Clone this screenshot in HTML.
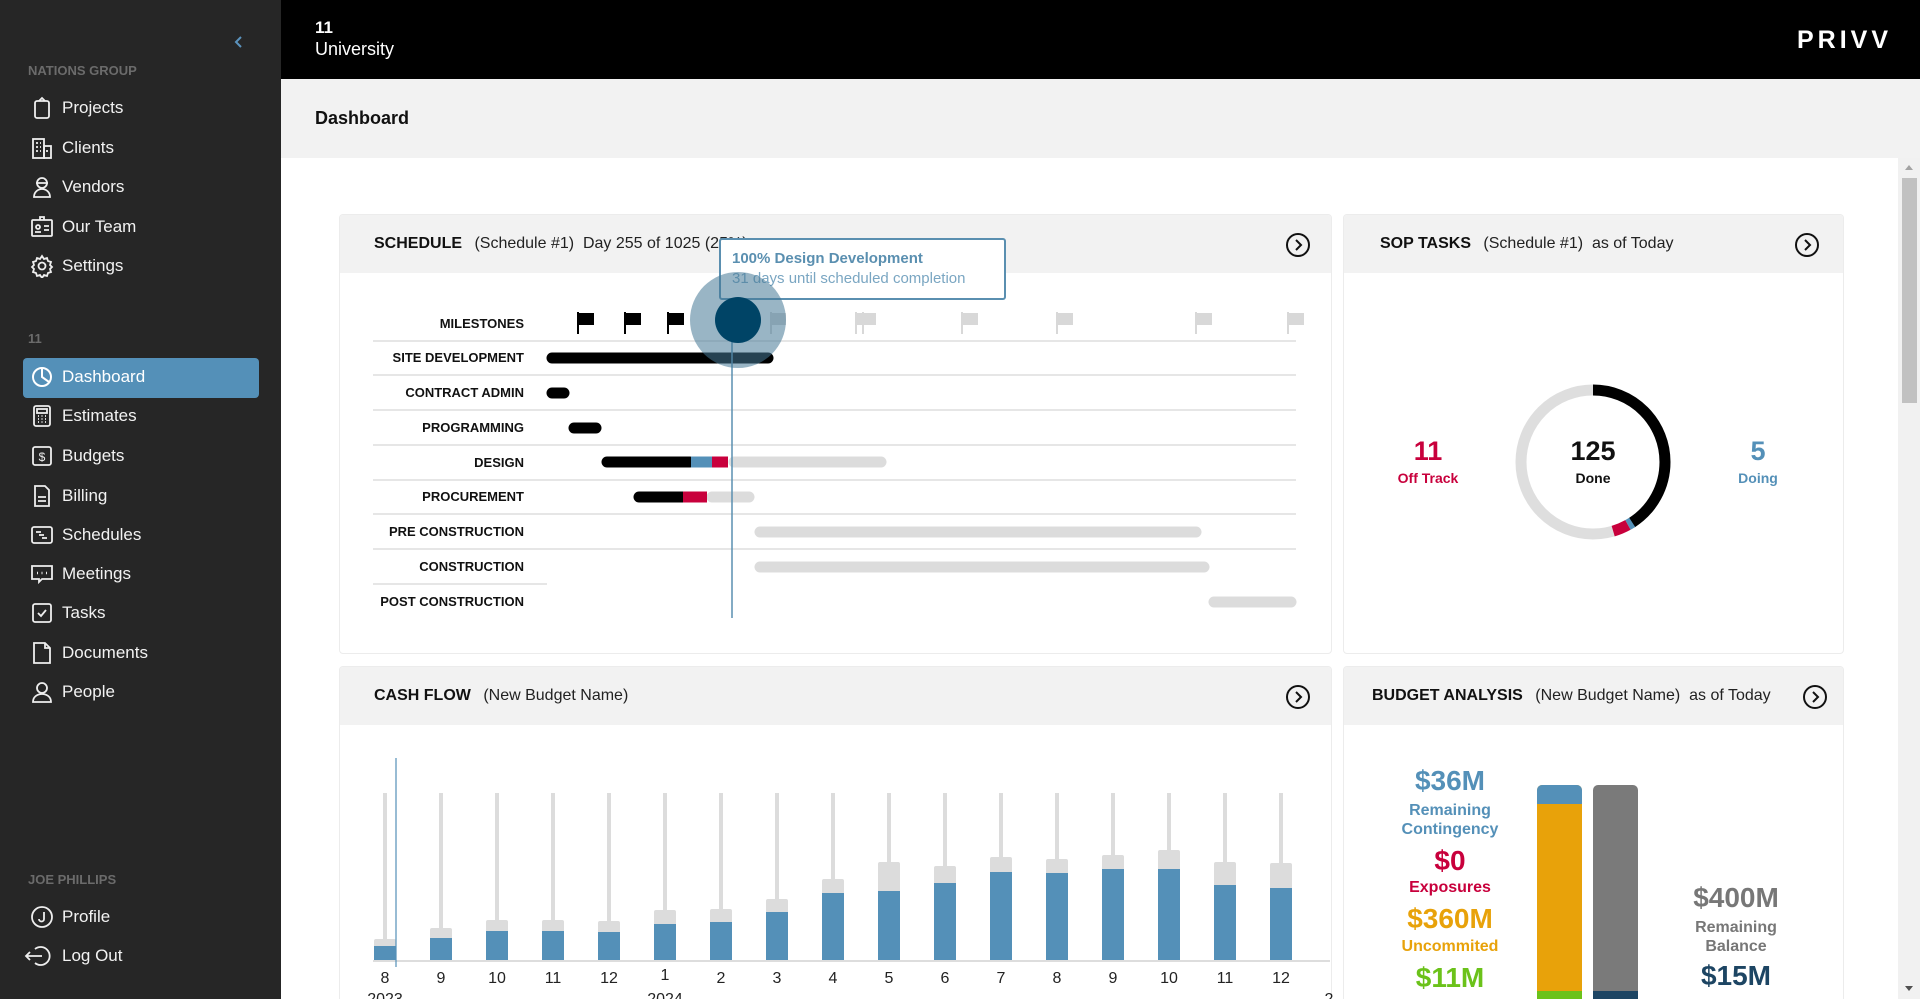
<!DOCTYPE html>
<html style="overflow:hidden;width:1920px;height:999px"><head><meta charset="utf-8"><style>
*{margin:0;padding:0;box-sizing:border-box}
body{width:1920px;height:999px;overflow:hidden;background:#fff;font-family:"Liberation Sans",Arial,sans-serif;position:relative}
#wrap{position:absolute;left:0;top:0;width:1920px;height:999px;overflow:hidden}
.a{position:absolute}
#side{left:0;top:0;width:281px;height:999px;background:#262626}
.grp{position:absolute;left:28px;font-size:13px;font-weight:bold;color:#6b6b6b}
.it{position:absolute;left:62px;font-size:17px;color:#f2f2f2;line-height:20px}
.ic{position:absolute;left:30px;width:24px;height:24px}
.card{position:absolute;background:#fff;border:1px solid #ececec;border-radius:4px;overflow:hidden}
.ch{position:absolute;left:0;top:0;right:0;height:58px;background:#f2f2f2}
.ct{position:absolute;font-size:16px;color:#222;white-space:nowrap}
.ct b{color:#111;margin-right:8px}
.lbl{position:absolute;right:0;font-size:13px;font-weight:bold;color:#111;text-align:right;width:200px}
.big{position:absolute;font-weight:bold;text-align:center;width:200px}
</style></head><body><div id="wrap">

<div id="side" class="a">
 <svg class="a" style="left:233px;top:34px" width="12" height="16" viewBox="0 0 12 16"><path d="M8 3 L3 8 L8 13" stroke="#5b93bd" stroke-width="2" fill="none"/></svg>
 <div class="grp" style="top:63px">NATIONS GROUP</div>
 <svg class="ic" style="top:96px" viewBox="0 0 24 24" fill="none" stroke="#eee" stroke-width="1.8"><rect x="5" y="5" width="14" height="17" rx="2"/><path d="M9 5 L12 2 L15 5"/></svg>
 <div class="it" style="top:98px">Projects</div>
 <svg class="ic" style="top:136px" viewBox="0 0 24 24" fill="none" stroke="#eee" stroke-width="1.8"><rect x="3" y="3" width="11" height="19"/><rect x="14" y="10" width="7" height="12"/><path d="M6 7h2M10 7h1M6 11h2M10 11h1M6 15h2M10 15h1M17 14v2"/></svg>
 <div class="it" style="top:138px">Clients</div>
 <svg class="ic" style="top:175px" viewBox="0 0 24 24" fill="none" stroke="#eee" stroke-width="1.8"><circle cx="12" cy="8" r="5"/><path d="M6 8h12M4 22c0-5 4-8 8-8s8 3 8 8z"/></svg>
 <div class="it" style="top:177px">Vendors</div>
 <svg class="ic" style="top:215px" viewBox="0 0 24 24" fill="none" stroke="#eee" stroke-width="1.8"><rect x="2" y="5" width="20" height="16" rx="1"/><path d="M10 5V2h4v3M5 17h6M14 11h5M14 15h5"/><circle cx="8" cy="12" r="2"/></svg>
 <div class="it" style="top:217px">Our Team</div>
 <svg class="ic" style="top:254px" viewBox="0 0 24 24" fill="none" stroke="#eee" stroke-width="1.8"><circle cx="12" cy="12" r="3.5"/><path d="M12 2l2 3 3-1 1 3 3 1-1 3 2 2-2 2 1 3-3 1-1 3-3-1-2 3-2-3-3 1-1-3-3-1 1-3-2-2 2-2-1-3 3-1 1-3 3 1z"/></svg>
 <div class="it" style="top:256px">Settings</div>
 <div class="grp" style="top:331px">11</div>
 <div class="a" style="left:23px;top:358px;width:236px;height:40px;background:#5490b8;border-radius:4px"></div>
 <svg class="ic" style="top:365px" viewBox="0 0 24 24" fill="none" stroke="#fff" stroke-width="2"><circle cx="12" cy="12" r="9"/><path d="M12 3v9l7 5" /></svg>
 <div class="it" style="top:367px;color:#fff">Dashboard</div>
 <svg class="ic" style="top:404px" viewBox="0 0 24 24" fill="none" stroke="#eee" stroke-width="1.8"><rect x="4" y="2" width="16" height="20" rx="2"/><rect x="7" y="5" width="10" height="4"/><path d="M8 12h1M11.5 12h1M15 12h1M8 15h1M11.5 15h1M15 15h1M8 18h1M11.5 18h1M15 18h1"/></svg>
 <div class="it" style="top:406px">Estimates</div>
 <svg class="ic" style="top:444px" viewBox="0 0 24 24" fill="none" stroke="#eee" stroke-width="1.8"><rect x="3" y="3" width="18" height="18" rx="2"/><text x="12" y="17" font-size="12" fill="#eee" stroke="none" text-anchor="middle" font-family="Liberation Sans">$</text></svg>
 <div class="it" style="top:446px">Budgets</div>
 <svg class="ic" style="top:484px" viewBox="0 0 24 24" fill="none" stroke="#eee" stroke-width="1.8"><path d="M5 2h10l4 4v16H5z"/><path d="M8 13h8M8 17h8"/></svg>
 <div class="it" style="top:486px">Billing</div>
 <svg class="ic" style="top:523px" viewBox="0 0 24 24" fill="none" stroke="#eee" stroke-width="1.8"><rect x="2" y="4" width="20" height="16" rx="2"/><path d="M6 9h5M9 12h5M12 15h5"/></svg>
 <div class="it" style="top:525px">Schedules</div>
 <svg class="ic" style="top:562px" viewBox="0 0 24 24" fill="none" stroke="#eee" stroke-width="1.8"><path d="M2 4h20v13H12l-3 3v-3H2z"/><path d="M7 11h1M11.5 11h1M16 11h1" stroke-width="2.4"/></svg>
 <div class="it" style="top:564px">Meetings</div>
 <svg class="ic" style="top:601px" viewBox="0 0 24 24" fill="none" stroke="#eee" stroke-width="1.8"><rect x="3" y="3" width="18" height="18" rx="2"/><path d="M8 12l3 3 5-6"/></svg>
 <div class="it" style="top:603px">Tasks</div>
 <svg class="ic" style="top:641px" viewBox="0 0 24 24" fill="none" stroke="#eee" stroke-width="1.8"><path d="M4 2h11l5 5v15H4z"/><path d="M15 2v5h5"/></svg>
 <div class="it" style="top:643px">Documents</div>
 <svg class="ic" style="top:680px" viewBox="0 0 24 24" fill="none" stroke="#eee" stroke-width="1.8"><circle cx="12" cy="8" r="5"/><path d="M3 22c0-5 4-8 9-8s9 3 9 8z"/></svg>
 <div class="it" style="top:682px">People</div>
 <div class="grp" style="top:872px">JOE PHILLIPS</div>
 <svg class="ic" style="top:905px" viewBox="0 0 24 24" fill="none" stroke="#eee" stroke-width="1.8"><circle cx="12" cy="12" r="10"/><path d="M14 7v7a2.5 2.5 0 0 1-5 0"/></svg>
 <div class="it" style="top:907px">Profile</div>
 <svg class="ic" style="top:944px;left:24px;width:28px" viewBox="0 0 28 24" fill="none" stroke="#eee" stroke-width="1.8"><path d="M11 5a9 9 0 1 1 0 14"/><path d="M18 12H2M6 8l-4 4 4 4"/></svg>
 <div class="it" style="top:946px">Log Out</div>
</div>

<div class="a" style="left:281px;top:0;width:1639px;height:79px;background:#000"></div>
<div class="a" style="left:315px;top:18px;color:#fff;font-size:17px;font-weight:bold">11</div>
<div class="a" style="left:315px;top:39px;color:#fff;font-size:18px">University</div>
<div class="a" style="left:1797px;top:26px;color:#fff;font-size:25px;font-weight:bold;letter-spacing:4px">PRIVV</div>

<div class="a" style="left:281px;top:79px;width:1639px;height:79px;background:#f2f2f2"></div>
<div class="a" style="left:315px;top:108px;font-size:18px;font-weight:bold;color:#111">Dashboard</div>

<div class="a" style="left:1898px;top:158px;width:22px;height:841px;background:#f1f1f1"></div>
<div class="a" style="left:1902px;top:178px;width:15px;height:225px;background:#c1c1c1"></div>
<svg class="a" style="left:1903px;top:162px" width="12" height="10"><path d="M2 8L6 3L10 8z" fill="#a3a3a3"/></svg>
<svg class="a" style="left:1903px;top:984px" width="12" height="10"><path d="M2 2L6 7L10 2z" fill="#505050"/></svg>

<!-- Schedule card -->
<div class="card" style="left:339px;top:214px;width:993px;height:440px">
 <div class="ch"></div>
 <div class="ct" style="left:34px;top:20px"><b>SCHEDULE</b> (Schedule #1)&nbsp;&nbsp;Day 255 of 1025 (25%)</div>
 <svg class="a" style="left:945px;top:17px" width="26" height="26" viewBox="0 0 26 26"><circle cx="13" cy="13" r="11" fill="none" stroke="#111" stroke-width="2"/><path d="M11 8l5 5-5 5" fill="none" stroke="#111" stroke-width="2"/></svg>
</div>
<div class="lbl" style="left:324px;top:316px">MILESTONES</div>
<div class="lbl" style="left:324px;top:350px">SITE DEVELOPMENT</div>
<div class="lbl" style="left:324px;top:385px">CONTRACT ADMIN</div>
<div class="lbl" style="left:324px;top:420px">PROGRAMMING</div>
<div class="lbl" style="left:324px;top:455px">DESIGN</div>
<div class="lbl" style="left:324px;top:489px">PROCUREMENT</div>
<div class="lbl" style="left:324px;top:524px">PRE CONSTRUCTION</div>
<div class="lbl" style="left:324px;top:559px">CONSTRUCTION</div>
<div class="lbl" style="left:324px;top:594px">POST CONSTRUCTION</div>
<svg class="a" style="left:0;top:0" width="1340" height="660">
 <g stroke="#ddd" stroke-width="1.5">
  <path d="M373 341H1296M373 375H1296M373 410H1296M373 445H1296M373 480H1296M373 514H1296M373 549H1296M373 584H547"/>
 </g>
 <g fill="#000">
  <path d="M577 312h2v22h-2zM579 313h15v12h-15zM624 312h2v22h-2zM626 313h15v12h-15zM667 312h2v22h-2zM669 313h15v12h-15z"/>
 </g>
 <g fill="#d8d8d8">
  <path d="M770 312h2v22h-2zM772 313h14v12h-14zM855 312h2v22h-2zM857 313h14v12h-14zM862 312h2v22h-2zM864 313h12v12h-12zM961 312h2v22h-2zM963 313h15v12h-15zM1056 312h2v22h-2zM1058 313h15v12h-15zM1195 312h2v22h-2zM1197 313h15v12h-15zM1287 312h2v22h-2zM1289 313h15v12h-15z"/>
 </g>
 <g stroke-linecap="round" stroke-width="11">
  <path d="M552 358H768" stroke="#000"/>
  <path d="M552 393H564" stroke="#000"/>
  <path d="M574 428H596" stroke="#000"/>
  <path d="M734 462H881" stroke="#dcdcdc"/>
  <path d="M607 462H690" stroke="#000"/>
  <path d="M712 497H749" stroke="#dcdcdc"/>
  <path d="M639 497H683" stroke="#000"/>
  <path d="M760 532H1196" stroke="#dcdcdc"/>
  <path d="M760 567H1204" stroke="#dcdcdc"/>
  <path d="M1214 602H1291" stroke="#dcdcdc"/>
 </g>
 <rect x="691" y="456.5" width="21" height="11" fill="#5490b8"/>
 <rect x="712" y="456.5" width="16" height="11" fill="#c8003c"/>
 <rect x="683" y="491.5" width="24" height="11" fill="#c8003c"/>
 <path d="M732 320V618" stroke="#5a8fb0" stroke-width="1.5"/>
</svg>
<div class="a" style="left:719px;top:238px;width:287px;height:62px;border:2px solid #5a8fb0;border-radius:3px;background:#fff"></div>
<div class="a" style="left:732px;top:250px;font-size:15px;font-weight:bold;color:#5a8fb0">100% Design Development</div>
<div class="a" style="left:732px;top:270px;font-size:15px;color:#7aa6c2">31 days until scheduled completion</div>
<svg class="a" style="left:680px;top:262px" width="120" height="120">
 <circle cx="58" cy="58" r="48" fill="rgba(70,120,150,0.55)"/>
 <circle cx="58" cy="58" r="23" fill="#004466"/>
</svg>

<!-- SOP card -->
<div class="card" style="left:1343px;top:214px;width:501px;height:440px">
 <div class="ch"></div>
 <div class="ct" style="left:36px;top:20px"><b>SOP TASKS</b> (Schedule #1)&nbsp;&nbsp;as of Today</div>
 <svg class="a" style="left:450px;top:17px" width="26" height="26" viewBox="0 0 26 26"><circle cx="13" cy="13" r="11" fill="none" stroke="#111" stroke-width="2"/><path d="M11 8l5 5-5 5" fill="none" stroke="#111" stroke-width="2"/></svg>
</div>
<svg class="a" style="left:1505px;top:374px" width="176" height="176" viewBox="0 0 176 176">
 <circle cx="88" cy="88" r="72" fill="none" stroke="#dedede" stroke-width="11"/>
 <circle cx="88" cy="88" r="72" fill="none" stroke="#000" stroke-width="11" stroke-dasharray="185 1000" transform="rotate(-90 88 88)"/>
 <circle cx="88" cy="88" r="72" fill="none" stroke="#5490b8" stroke-width="11" stroke-dasharray="5 1000" transform="rotate(57 88 88)"/>
 <circle cx="88" cy="88" r="72" fill="none" stroke="#c8003c" stroke-width="11" stroke-dasharray="16 1000" transform="rotate(61 88 88)"/>
</svg>
<div class="big" style="left:1328px;top:436px;font-size:27px;color:#c8003c">11</div>
<div class="big" style="left:1328px;top:470px;font-size:14px;color:#c8003c">Off Track</div>
<div class="big" style="left:1493px;top:436px;font-size:27px;color:#111">125</div>
<div class="big" style="left:1493px;top:470px;font-size:14px;color:#111">Done</div>
<div class="big" style="left:1658px;top:436px;font-size:27px;color:#5490b8">5</div>
<div class="big" style="left:1658px;top:470px;font-size:14px;color:#5490b8">Doing</div>

<!-- Cash flow card -->
<div class="card" style="left:339px;top:666px;width:993px;height:350px">
 <div class="ch"></div>
 <div class="ct" style="left:34px;top:20px"><b>CASH FLOW</b> (New Budget Name)</div>
 <svg class="a" style="left:945px;top:17px" width="26" height="26" viewBox="0 0 26 26"><circle cx="13" cy="13" r="11" fill="none" stroke="#111" stroke-width="2"/><path d="M11 8l5 5-5 5" fill="none" stroke="#111" stroke-width="2"/></svg>
</div>
<svg class="a" style="left:0;top:0" width="1340" height="999" font-family="Liberation Sans" font-size="16" fill="#222" text-anchor="middle">
 <path d="M373 961H1330" stroke="#ddd" stroke-width="2"/>
 <g stroke="#dcdcdc" stroke-width="4">
  <path d="M385 793V939M441 793V928M497 793V920M553 793V920M609 793V921M665 793V910M721 793V909M777 793V899M833 793V879M889 793V862M945 793V866M1001 793V857M1057 793V859M1113 793V855M1169 793V850M1225 793V862M1281 793V863"/>
 </g>
 <g fill="#dcdcdc">
  <rect x="374" y="939" width="22" height="21" rx="2"/><rect x="430" y="928" width="22" height="32" rx="2"/><rect x="486" y="920" width="22" height="40" rx="2"/><rect x="542" y="920" width="22" height="40" rx="2"/><rect x="598" y="921" width="22" height="39" rx="2"/><rect x="654" y="910" width="22" height="50" rx="2"/><rect x="710" y="909" width="22" height="51" rx="2"/><rect x="766" y="899" width="22" height="61" rx="2"/><rect x="822" y="879" width="22" height="81" rx="2"/><rect x="878" y="862" width="22" height="98" rx="2"/><rect x="934" y="866" width="22" height="94" rx="2"/><rect x="990" y="857" width="22" height="103" rx="2"/><rect x="1046" y="859" width="22" height="101" rx="2"/><rect x="1102" y="855" width="22" height="105" rx="2"/><rect x="1158" y="850" width="22" height="110" rx="2"/><rect x="1214" y="862" width="22" height="98" rx="2"/><rect x="1270" y="863" width="22" height="97" rx="2"/>
 </g>
 <g fill="#5490b8">
  <rect x="374" y="946" width="22" height="14"/><rect x="430" y="938" width="22" height="22"/><rect x="486" y="931" width="22" height="29"/><rect x="542" y="931" width="22" height="29"/><rect x="598" y="932" width="22" height="28"/><rect x="654" y="924" width="22" height="36"/><rect x="710" y="922" width="22" height="38"/><rect x="766" y="912" width="22" height="48"/><rect x="822" y="893" width="22" height="67"/><rect x="878" y="891" width="22" height="69"/><rect x="934" y="883" width="22" height="77"/><rect x="990" y="872" width="22" height="88"/><rect x="1046" y="873" width="22" height="87"/><rect x="1102" y="869" width="22" height="91"/><rect x="1158" y="869" width="22" height="91"/><rect x="1214" y="885" width="22" height="75"/><rect x="1270" y="888" width="22" height="72"/>
 </g>
 <path d="M396 758V967" stroke="#5490b8" stroke-width="1.2"/>
 <text x="385" y="983">8</text><text x="441" y="983">9</text><text x="497" y="983">10</text><text x="553" y="983">11</text><text x="609" y="983">12</text><text x="665" y="980">1</text><text x="721" y="983">2</text><text x="777" y="983">3</text><text x="833" y="983">4</text><text x="889" y="983">5</text><text x="945" y="983">6</text><text x="1001" y="983">7</text><text x="1057" y="983">8</text><text x="1113" y="983">9</text><text x="1169" y="983">10</text><text x="1225" y="983">11</text><text x="1281" y="983">12</text>
 <text x="385" y="1004">2023</text><text x="665" y="1004">2024</text><text x="1329" y="1004">2</text>
</svg>

<!-- Budget card -->
<div class="card" style="left:1343px;top:666px;width:501px;height:350px">
 <div class="ch"></div>
 <div class="ct" style="left:28px;top:20px"><b>BUDGET ANALYSIS</b> (New Budget Name)&nbsp;&nbsp;as of Today</div>
 <svg class="a" style="left:458px;top:17px" width="26" height="26" viewBox="0 0 26 26"><circle cx="13" cy="13" r="11" fill="none" stroke="#111" stroke-width="2"/><path d="M11 8l5 5-5 5" fill="none" stroke="#111" stroke-width="2"/></svg>
</div>
<div class="a" style="left:1537px;top:785px;width:45px;height:220px;border-radius:5px;overflow:hidden;background:#e8a20a">
 <div style="height:19px;background:#5490b8"></div>
 <div style="position:absolute;top:206px;left:0;right:0;height:20px;background:#6bc21a"></div>
</div>
<div class="a" style="left:1593px;top:785px;width:45px;height:220px;border-radius:5px;overflow:hidden;background:#7a7a7a">
 <div style="position:absolute;top:206px;left:0;right:0;height:20px;background:#1d4563"></div>
</div>
<div class="big" style="left:1350px;top:765px;font-size:28px;color:#5490b8">$36M</div>
<div class="big" style="left:1350px;top:801px;font-size:16px;line-height:19px;color:#5490b8">Remaining<br>Contingency</div>
<div class="big" style="left:1350px;top:845px;font-size:28px;color:#c8003c">$0</div>
<div class="big" style="left:1350px;top:879px;font-size:16px;color:#c8003c">Exposures</div>
<div class="big" style="left:1350px;top:903px;font-size:28px;color:#e8a20a">$360M</div>
<div class="big" style="left:1350px;top:938px;font-size:16px;color:#e8a20a">Uncommited</div>
<div class="big" style="left:1350px;top:962px;font-size:28px;color:#6bc21a">$11M</div>
<div class="big" style="left:1636px;top:882px;font-size:28px;color:#777">$400M</div>
<div class="big" style="left:1636px;top:918px;font-size:16px;line-height:19px;color:#777">Remaining<br>Balance</div>
<div class="big" style="left:1636px;top:960px;font-size:28px;color:#1d4563">$15M</div>
</div></body></html>
